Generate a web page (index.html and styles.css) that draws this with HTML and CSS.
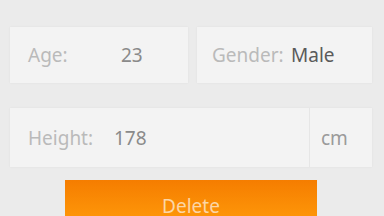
FILE: index.html
```html
<!DOCTYPE html>
<html lang="en">
<head>
  <meta charset="UTF-8">
  <title>Profile</title>
  <link rel="stylesheet" href="styles.css">
</head>
<body>

<div class="form">
  <div class="row">
    <div class="field field-age">
      <span class="label">Age:</span>
      <span class="value">23</span>
    </div>
    <div class="field field-gender">
      <span class="label">Gender:</span>
      <span class="value dark">Male</span>
    </div>
  </div>

  <div class="field field-height">
    <span class="label">Height:</span>
    <span class="value">178</span>
    <span class="unit">cm</span>
  </div>

  <button class="delete-btn">Delete</button>
</div>

</body>
</html>
```

FILE: styles.css
```css
body {
  margin: 0;
  font-family: 'Noto Sans', 'Open Sans', sans-serif;
  background: #ebebeb;
  overflow: hidden;
}

.form {
  padding: 27px 12px 0 10px;
  display: flex;
  flex-direction: column;
}

.row {
  display: grid;
  grid-template-columns: 178px 175px;
  gap: 9px;
}

.field {
  display: flex;
  align-items: center;
  background: #f3f3f3;
  box-shadow: 0 0 2px rgba(0, 0, 0, 0.06);
  font-size: 19px;
  height: 56px;
  box-sizing: border-box;
}

.label {
  color: #bababa;
}

.value {
  color: #8a8a8a;
}

.value.dark {
  color: #5a5a5a;
}

.field-age {
  padding-left: 18px;
}

.field-age .label {
  width: 93px;
}

.field-gender {
  padding-left: 15px;
}

.field-gender .label {
  width: 79px;
}

.field-height {
  margin-top: 25px;
  height: 59px;
  padding-left: 18px;
}

.field-height .label {
  width: 86px;
}

.field-height .value {
  flex: 1;
}

.unit {
  color: #9a9a9a;
  border-left: 1px solid #e6e6e6;
  align-self: stretch;
  display: flex;
  align-items: center;
  width: 63px;
  padding-left: 11px;
  box-sizing: border-box;
}

.delete-btn {
  margin: 13px 0 0 55px;
  width: 252px;
  height: 44px;
  border: none;
  background: linear-gradient(180deg, #f57d00, #ff9a0a);
  color: #fcd6a6;
  font-family: inherit;
  font-size: 19px;
  padding: 8px 0 0;
}
```
